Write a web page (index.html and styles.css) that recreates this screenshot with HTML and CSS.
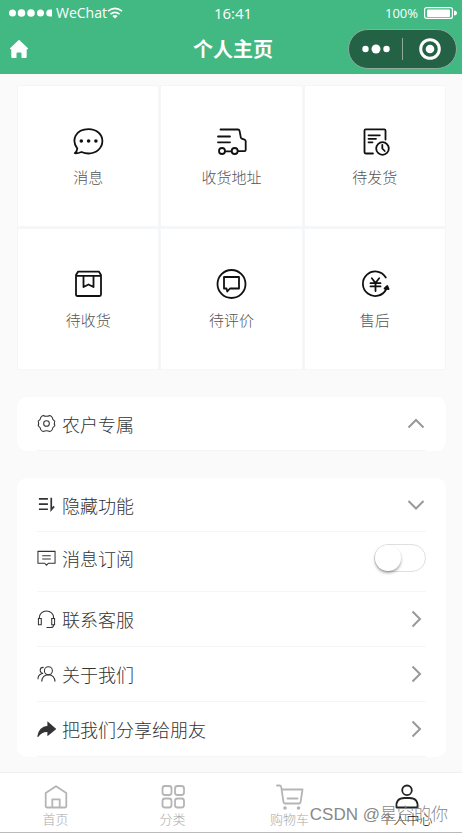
FILE: index.html
```html
<!DOCTYPE html>
<html lang="zh-CN">
<head>
  <meta charset="UTF-8" />
  <meta name="viewport" content="width=device-width, initial-scale=1.0"/>
  <title>个人主页</title>
  <link rel="stylesheet" href="styles.css">
</head>
<body>
  <header class="header">
    <div class="status">
      <div class="carrier">
        <svg width="44" height="10" viewBox="0 0 44 10" fill="#fff"><circle cx="3.5" cy="5" r="3.5"/><circle cx="12.5" cy="5" r="3.8"/><circle cx="22" cy="5" r="3.8"/><circle cx="31.5" cy="5" r="3.5"/><path d="M43 1.5v7h-2a3.8 3.5 0 0 1 0-7z"/></svg>
        <span class="carrier-name">WeChat</span>
        <svg width="16" height="12" viewBox="0 0 16 12" fill="none" stroke="#fff" stroke-width="1.7"><path d="M1 4.2q7-5.6 14 0M3.4 7.2q4.6-3.6 9.2 0"/><path d="M5.3 9q2.7-2 5.4 0L8 11.6z" fill="#fff" stroke="none"/></svg>
      </div>
      <span class="time">16:41</span>
      <div class="battery">
        <span>100%</span>
        <svg width="33" height="12" viewBox="0 0 33 12"><rect x=".6" y=".6" width="27.8" height="10.8" rx="2" fill="none" stroke="#fff" stroke-width="1.2"/><rect x="3" y="2.5" width="23" height="7.5" rx="1" fill="#fff"/><path d="M30 3.5q3 .5 3 2.5t-3 2.5z" fill="#fff"/></svg>
      </div>
    </div>
    <div class="navbar">
      <a class="home" href="#" aria-label="首页">
        <svg width="20" height="20" viewBox="0 0 20 20" fill="#fff"><path d="M10 .8 19 9.3q.5 1-.7 1h-.6V18q0 1-1 1h-4.200v-4.500q0-1-1-1h-3q-1 0-1 1V19H3.300q-1 0-1-1v-7.700h-.6q-1.200 0-.7-1z"/></svg>
      </a>
      <h1>个人主页</h1>
      <div class="capsule">
        <button aria-label="更多"><svg width="28" height="10" viewBox="0 0 28 10" fill="#fff"><circle cx="3.500" cy="5" r="3.200"/><circle cx="14" cy="5" r="4.500"/><circle cx="24.500" cy="5" r="3.200"/></svg></button>
        <button aria-label="关闭"><svg width="22" height="22" viewBox="0 0 22 22"><circle cx="11" cy="11" r="9.300" fill="none" stroke="#fff" stroke-width="3"/><circle cx="11" cy="11" r="4.300" fill="#fff"/></svg></button>
      </div>
    </div>
  </header>

  <main>
    <nav class="grid">
      <a href="#">
        <svg class="grid-icon" viewBox="0 0 32 32"><path d="M5.300 23.600C-1 15 3.500 4.100 16.500 4.100c8 0 13.900 5 13.900 12s-6 12.400-13.900 12.400c-3 0-5.300-.8-7-1.500-2 .8-4 1.400-6.700 1.200 1.500-1.300 2.300-2.700 2.500-4.600z"/><g class="solid"><circle cx="9.300" cy="16" r="1.800"/><circle cx="16.600" cy="16" r="1.800"/><circle cx="23.900" cy="16" r="1.800"/></g></svg>
        <span>消息</span>
      </a>
      <a href="#">
        <svg class="grid-icon" viewBox="0 0 32 32"><path d="M5.500 4.500H23q1.200 0 1.500 1.200l1.300 6.600q.2 1 1 1.300l2.700 1q1.200.5 1.200 1.700V25q0 1.200-1.200 1.200H23M3 11.500h12M3 17.300h12M10 26.300h6.500"/><circle cx="7" cy="26" r="3"/><circle cx="19.700" cy="26" r="3"/></svg>
        <span>收货地址</span>
      </a>
      <a href="#">
        <svg class="grid-icon" viewBox="0 0 32 32"><path d="M14 28.500H6.700q-1.200 0-1.200-1.200V5.500q0-1.200 1.200-1.200h18.600q1.200 0 1.200 1.200v9M9.500 10.300h11.300M9.500 13.800h7.500M9.500 17.300h4"/><circle cx="23.500" cy="23.500" r="6.300"/><path d="M23.300 19.800v3.700l2.400 2.500"/></svg>
        <span>待发货</span>
      </a>
      <a href="#">
        <svg class="grid-icon" viewBox="0 0 32 32"><path d="M6 3.700h21l2 3.300v19.500q0 1.500-1.500 1.500h-22Q4 28 4 26.500V7zM4 7.800h25M11.500 8v11l5-2.500 5 2.500V8"/></svg>
        <span>待收货</span>
      </a>
      <a href="#">
        <svg class="grid-icon" viewBox="0 0 32 32"><circle cx="16.500" cy="16" r="14"/><path d="M9 9h15v11.500H15L12.300 23.500 11.500 20.500H9z"/></svg>
        <span>待评价</span>
      </a>
      <a href="#">
        <svg class="grid-icon" viewBox="0 0 32 32"><path d="M26.800 9.500A12.300 12.300 0 1 0 27.300 21M12.800 10.300l3.700 4.700 3.700-4.700M11.500 15.200h10M11.500 18.400h10M16.500 15v8"/><path class="solid" d="m28.300 18 1.300 3-4-.5z"/></svg>
        <span>售后</span>
      </a>
    </nav>

    <section class="card">
      <button class="row" aria-expanded="true">
        <svg class="row-icon" viewBox="0 0 20 20"><path d="M6.500 1.500Q10 3.300 13.500 1.500q2 .7 2.500 2 .3 2.500 2.700 4-.9 2.500 0 5-2.400 1.500-2.700 4-.5 1.300-2.500 2-3.500-1.800-7 0-2-.7-2.500-2-.3-2.500-2.700-4 .9-2.500 0-5 2.400-1.500 2.700-4 .5-1.300 2.500-2z"/><circle cx="10" cy="10" r="3"/></svg>
        <span class="row-text">农户专属</span>
        <svg class="arrow" viewBox="0 0 20 20"><path d="m2.500 13.500 7.500-7.500 7.500 7.500"/></svg>
      </button>
    </section>

    <section class="card">
      <button class="row" aria-expanded="false">
        <svg class="row-icon bold" viewBox="0 0 20 20"><path d="M2 4h9.500M2 9.500h9.500M2 15h9.500M15 3v12.500l3-3.500"/></svg>
        <span class="row-text">隐藏功能</span>
        <svg class="arrow" viewBox="0 0 20 20"><path d="m2.500 6 7.500 7.500 7.500-7.500"/></svg>
      </button>
      <label class="row row-switch">
        <svg class="row-icon" viewBox="0 0 20 20"><path d="M1 2.500h18v12.500h-7l-2 2-2-2H1zM5.500 7h9M5.500 10.500h9"/></svg>
        <span class="row-text">消息订阅</span>
        <input class="switch" type="checkbox">
      </label>
      <a class="row" href="#">
        <svg class="row-icon" viewBox="0 0 20 20"><path d="M2.500 9V8a7.500 7 0 0 1 15 0v1M1.500 9h3v6.500h-3zM15.500 9h3v6.500h-3zM17.500 15.500q0 3-3 3H10"/></svg>
        <span class="row-text">联系客服</span>
        <svg class="arrow" viewBox="0 0 20 20"><path d="m6.500 2.500 7.500 7.500-7.500 7.500"/></svg>
      </a>
      <a class="row" href="#">
        <svg class="row-icon" viewBox="0 0 20 20"><circle cx="12" cy="6" r="4.200"/><path d="M5 17.500q.3-7 7-7.300 6.500.3 7 7.300M7 2.500Q3.500 2.300 3.300 5.500 3.500 8.500 6.500 9M5 9.300Q1 10.500 1 15"/></svg>
        <span class="row-text">关于我们</span>
        <svg class="arrow" viewBox="0 0 20 20"><path d="m6.500 2.500 7.500 7.500-7.500 7.500"/></svg>
      </a>
      <button class="row">
        <svg class="row-icon solid" viewBox="0 0 20 20"><path d="m11.500 2.500 8 7-8 6.500v-4Q5 11.500.8 17.500 2 7.500 11.500 6.500z"/></svg>
        <span class="row-text">把我们分享给朋友</span>
        <svg class="arrow" viewBox="0 0 20 20"><path d="m6.500 2.500 7.500 7.500-7.500 7.500"/></svg>
      </button>
    </section>
  </main>

  <footer class="footer">
    <nav class="tabbar">
      <a href="#">
        <svg class="tab-icon" viewBox="0 0 28 28"><path d="M3.700 10 14 3.200 24.300 10v13.300q0 1.200-1.200 1.200H4.900q-1.200 0-1.200-1.200zM10.300 24v-7.700h7.400V24"/></svg>
        <span>首页</span>
      </a>
      <a href="#">
        <svg class="tab-icon" viewBox="0 0 28 28"><rect x="3.500" y="3" width="9" height="9" rx="2.500"/><rect x="16" y="3" width="9" height="9" rx="2.500"/><rect x="3.500" y="15.500" width="9" height="9" rx="2.500"/><rect x="16" y="15.500" width="9" height="9" rx="2.500"/></svg>
        <span>分类</span>
      </a>
      <a href="#">
        <svg class="tab-icon" viewBox="0 0 28 28"><path d="M1 2.500h2.500Q5 2.500 5.200 4l2.300 15q.3 1.500 1.800 1.500h13.500q1.500 0 1.800-1.500L26.500 6.500H5.700M11.500 15.500h10"/><g class="dot"><circle cx="9" cy="25" r="1.800"/><circle cx="22.500" cy="25" r="1.800"/></g></svg>
        <span>购物车</span>
      </a>
      <a class="active" href="#">
        <svg class="tab-icon" viewBox="0 0 28 28"><circle cx="14" cy="7.300" r="4.800"/><path d="M3.500 24.500q-1-9.500 8-9.500h5q9 0 8 9.500z"/></svg>
        <span>个人中心</span>
      </a>
    </nav>
    <span class="watermark">CSDN @星空的你</span>
  </footer>
</body>
</html>
```
FILE: styles.css
```css
* {
  box-sizing: border-box;
}

body {
  margin: 0;
  min-height: 100vh;
  display: flex;
  flex-direction: column;
  background: #fafafa;
  color: #333;
  font-family: "Noto Sans CJK SC", sans-serif;
  font-weight: 300;
}

a {
  color: inherit;
  text-decoration: none;
}

button {
  border: none;
  background: none;
  padding: 0;
  color: inherit;
  font: inherit;
  cursor: pointer;
}

svg {
  display: block;
  flex: none;
}

/* header */
.header {
  background: #42b883;
  color: #fff;
  height: 74px;
}

.status,
.navbar {
  display: grid;
  grid-template-columns: 1fr auto 1fr;
  align-items: center;
}

.status {
  height: 25px;
  padding: 0 5px 0 9px;
  font: 400 14px/24px "Open Sans", sans-serif;
}

.time {
  font-size: 15px;
}

.carrier,
.battery {
  display: flex;
  align-items: center;
}

.carrier-name {
  margin-left: 3px;
}

.battery {
  justify-content: flex-end;
  gap: 6px;
  font-size: 13px;
}

.navbar {
  height: 48px;
  padding: 0 5px 0 9px;
}

.home {
  justify-self: start;
}

h1 {
  margin: 0;
  font-size: 20px;
  line-height: 28px;
  font-weight: 700;
}

.capsule {
  justify-self: end;
  display: flex;
  width: 109px;
  height: 40px;
  padding: 8px 0;
  background: #236245;
  border: 1px solid #91a99d;
  border-radius: 20px;
}

.capsule button {
  flex: 1;
  display: flex;
  align-items: center;
  justify-content: center;
}

.capsule button + button {
  border-left: 1px solid #91a99d;
}

/* shortcuts */
main {
  flex: 1;
  padding: 11px 16px 15px 17px;
}

.grid {
  display: grid;
  grid-template-columns: repeat(3, 1fr);
  gap: 3px;
  padding: 1px;
  background: #f5f6f7;
}

.grid a {
  height: 140px;
  display: flex;
  flex-direction: column;
  align-items: center;
  justify-content: center;
  gap: 10px;
  background: #fff;
  color: #555;
  font-size: 15px;
  line-height: 20px;
}

.grid-icon {
  width: 32px;
  height: 32px;
  fill: none;
  stroke: #111;
  stroke-width: 1.8;
  stroke-linecap: round;
  stroke-linejoin: round;
}

.grid-icon .solid {
  fill: #111;
}

.grid-icon g.solid {
  stroke: none;
}

/* list cards */
.card {
  margin-top: 27px;
  padding: 0 20px;
  background: #fff;
  border-radius: 10px;
}

.row {
  width: 100%;
  height: 55px;
  display: flex;
  align-items: center;
  gap: 6px;
  border-bottom: 1px solid #f5f5f5;
  font-size: 18px;
  line-height: 26px;
  text-align: left;
}

button.row[aria-expanded] {
  height: 54px;
}

.row-switch {
  height: 60px;
  padding-bottom: 7px;
}

.row-text {
  flex: 1;
}

.row-icon {
  width: 19px;
  height: 19px;
  fill: none;
  stroke: #333;
  stroke-width: 1.1;
}

.row-icon.bold {
  stroke-width: 1.8;
}

.row-icon.solid {
  fill: #333;
}

.arrow {
  width: 20px;
  height: 20px;
  fill: none;
  stroke: #999;
  stroke-width: 2;
}

.switch {
  appearance: none;
  width: 52px;
  height: 28px;
  margin: 0;
  border: 1px solid #dfdfdf;
  border-radius: 14px;
  background: #fff;
}

.switch::before {
  content: "";
  display: block;
  width: 26px;
  height: 26px;
  border-radius: 50%;
  background: #fff;
  box-shadow: 0 2px 3px rgba(0, 0, 0, 0.35);
}

.switch:checked {
  background: #42b883;
}

.switch:checked::before {
  margin-left: 24px;
}

/* bottom tabs */
.footer {
  position: relative;
  overflow: hidden;
  background: #fff;
  border-top: 1px solid #f0f0f0;
  border-bottom: 1px solid #bbb;
}

.tabbar {
  height: 59px;
  margin: 0 -3px;
  display: grid;
  grid-template-columns: repeat(4, 1fr);
}

.tabbar a {
  display: flex;
  flex-direction: column;
  align-items: center;
  padding-top: 10px;
  color: #aaa;
  font-size: 13px;
  line-height: 16px;
}

.tab-icon {
  width: 28px;
  height: 28px;
  fill: none;
  stroke: #b5b5b5;
  stroke-width: 1.8;
  stroke-linejoin: round;
  stroke-linecap: round;
}

.tab-icon .dot {
  fill: #b5b5b5;
  stroke: none;
}

.tabbar .active {
  color: #111;
}

.active .tab-icon {
  stroke: #222;
}

.watermark {
  position: absolute;
  right: 14px;
  bottom: 5px;
  color: #888;
  font-family: "Liberation Sans", "Noto Sans CJK SC", sans-serif;
  font-size: 17px;
  line-height: 24px;
}
```
